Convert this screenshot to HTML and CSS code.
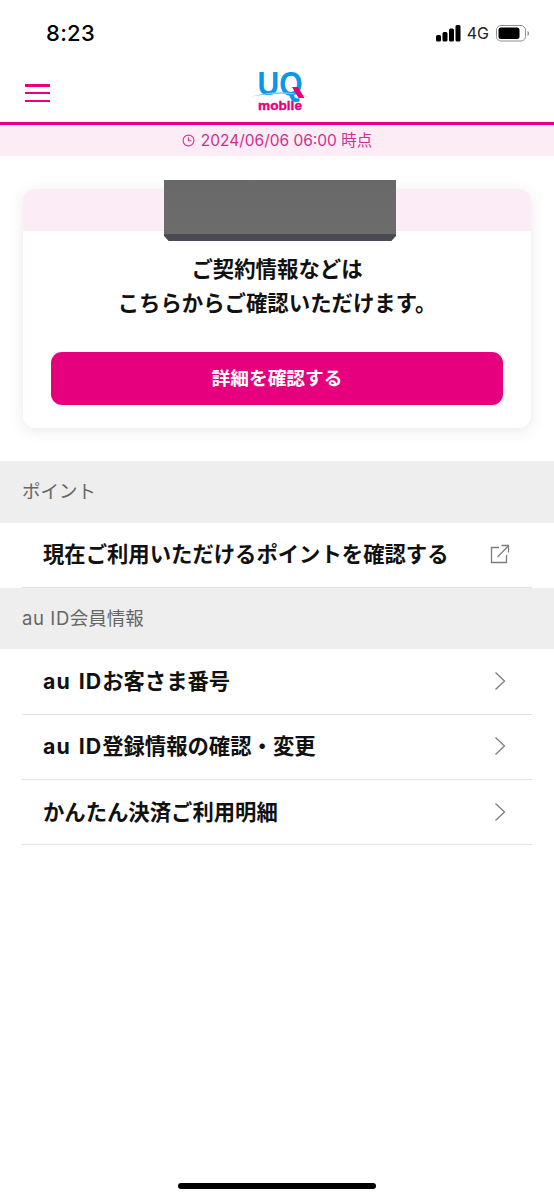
FILE: index.html
```html
<!DOCTYPE html>
<html lang="ja">
<head>
<meta charset="utf-8">
<title>UQ mobile</title>
<link rel="stylesheet" href="styles.css">
</head>
<body>
<div class="status">
  <span class="clock">8:23</span>
  <div class="status-right">
    <svg class="signal" width="25" height="17" viewBox="0 0 25 17"><rect x="0" y="10" width="5" height="6.500" rx="1.500"/><rect x="6.500" y="7" width="5" height="9.500" rx="1.500"/><rect x="13" y="3.500" width="5" height="13" rx="1.500"/><rect x="19.500" y="0" width="5" height="16.500" rx="1.500"/></svg>
    <span class="net">4G</span>
    <svg class="battery" width="34" height="17" viewBox="0 0 34 17"><rect x="0.500" y="0.500" width="29" height="15.500" rx="4.500" fill="none" stroke="#8e8e8e"/><rect x="2.500" y="2.500" width="21" height="11.500" rx="2.500" fill="#000"/><path d="M31.500 6v5c1-.4 1.600-1.400 1.600-2.500S32.500 6.400 31.500 6z" fill="#8e8e8e"/></svg>
  </div>
</div>
<header class="header">
  <button class="menu" aria-label="menu"><span></span><span></span><span></span></button>
  <svg class="logo" width="60" height="56" viewBox="0 -6 60 56">
    <text class="logo-uq" x="30" y="28" text-anchor="middle" textLength="45" lengthAdjust="spacingAndGlyphs">UQ</text>
    <path d="M1 30C18 23.500 42 23.500 59 30C42 25.500 18 25.500 1 30Z" fill="#7cc6f2"/>
    <path d="M42 20h6l6.500 11h-6z" fill="#e6007e"/>
    <text class="logo-mobile" x="30" y="43" text-anchor="middle" textLength="44" lengthAdjust="spacingAndGlyphs">mobile</text>
  </svg>
</header>
<div class="timestamp">
  <svg width="13" height="13" viewBox="0 0 13 13" fill="none" stroke="#d6338f" stroke-width="1.100"><circle cx="6.500" cy="6.500" r="5.400"/><path d="M6.500 3.200v3.500h3"/></svg>
  <span>2024/06/06 06:00 時点</span>
</div>
<main class="main">
  <section class="card">
    <div class="card-band"></div>
    <div class="redaction"></div>
    <p class="card-text">ご契約情報などは<br>こちらからご確認いただけます。</p>
    <a class="cta">詳細を確認する</a>
  </section>
</main>
<h2 class="section-title">ポイント</h2>
<ul class="list">
  <li class="row"><span>現在ご利用いただけるポイントを確認する</span>
    <svg class="ico" width="20" height="20" viewBox="0 0 20 20" fill="none" stroke="#7d7d7d" stroke-width="1.300"><path d="M9 3.500H1.500v15h15v-7.500"/><path d="M7.500 13L18 2.200"/><path d="M11.500 1.500H18.500v7"/></svg>
  </li>
</ul>
<h2 class="section-title"><span class="latin-light">au ID</span>会員情報</h2>
<ul class="list">
  <li class="row"><span><span class="latin">au ID</span>お客さま番号</span>
    <svg class="ico" width="20" height="20" viewBox="0 0 20 20" fill="none" stroke="#7d7d7d" stroke-width="1.300"><path d="M5.500 1.500L14.500 10L5.500 18.500"/></svg>
  </li>
  <li class="row"><span><span class="latin">au ID</span>登録情報の確認・変更</span>
    <svg class="ico" width="20" height="20" viewBox="0 0 20 20" fill="none" stroke="#7d7d7d" stroke-width="1.300"><path d="M5.500 1.500L14.500 10L5.500 18.500"/></svg>
  </li>
  <li class="row"><span>かんたん決済ご利用明細</span>
    <svg class="ico" width="20" height="20" viewBox="0 0 20 20" fill="none" stroke="#7d7d7d" stroke-width="1.300"><path d="M5.500 1.500L14.500 10L5.500 18.500"/></svg>
  </li>
</ul>
<div class="home-indicator"></div>
</body>
</html>
```
FILE: styles.css
```css
* { box-sizing: border-box; }
html, body { margin: 0; padding: 0; }
body {
  width: 554px;
  height: 1200px;
  position: relative;
  overflow: hidden;
  background: #fff;
  color: #000;
  font-family: "Inter", "Noto Sans CJK JP", sans-serif;
}
.status {
  height: 60px;
  display: flex;
  justify-content: space-between;
  align-items: flex-start;
  padding: 20px 24px 0 46px;
}
.clock {
  font: 500 22px/26px "Inter", sans-serif;
  letter-spacing: 0.300px;
}
.status-right {
  display: flex;
  align-items: center;
  gap: 6px;
  padding-top: 5px;
}
.net { font: 400 16px/17px "Inter", sans-serif; margin-right: 1px; color: #222; }
.signal { display: block; }
.battery { display: block; }
.header {
  height: 62px;
  position: relative;
  display: flex;
  align-items: flex-start;
  justify-content: center;
  padding-top: 1px;
}
.menu {
  position: absolute;
  left: 25px;
  top: 24px;
  width: 25px;
  height: 18px;
  padding: 0;
  border: 0;
  background: none;
  display: flex;
  flex-direction: column;
  justify-content: space-between;
}
.menu span { display: block; height: 2.500px; background: #e6007e; }
.logo { display: block; margin-left: 6px; }
.logo-uq { font: 700 33px "Liberation Sans", sans-serif; fill: #0a96ec; }
.logo-mobile { font: 700 13px "Liberation Sans", sans-serif; fill: #e6007e; stroke: #e6007e; stroke-width: 0.400px; }
.timestamp {
  height: 34px;
  border-top: 3px solid #e6007e;
  background: #fbecf5;
  color: #cf2e8c;
  font: 400 15.500px/31px "Inter", "Noto Sans CJK JP", sans-serif;
  display: flex;
  align-items: center;
  justify-content: center;
  gap: 6px;
}
.main { padding: 33px 23px 33px; }
.card {
  position: relative;
  height: 239px;
  border-radius: 12px;
  background: #fff;
  box-shadow: 0 3px 14px rgba(120, 60, 110, 0.13);
  padding: 62px 28px 0;
}
.card-band {
  position: absolute;
  left: 0;
  right: 0;
  top: 0;
  height: 42px;
  background: #fbecf5;
  border-radius: 12px 12px 0 0;
}
.redaction {
  position: absolute;
  left: 141px;
  top: -9px;
  width: 232px;
  height: 61px;
  background: linear-gradient(#696969, #6c6c6c 88%, #4b4b55 88%, #4a4a52);
  clip-path: polygon(0 0, 100% 0, 100% 92%, 98% 100%, 2% 100%, 0 92%);
}
.card-text {
  margin: 0;
  text-align: center;
  font: 700 21.400px/34px "Noto Sans CJK JP", sans-serif;
  color: #111;
}
.cta {
  display: block;
  margin-top: 33px;
  height: 53px;
  border-radius: 11px;
  background: #e6007e;
  color: #fff;
  text-align: center;
  font: 700 18.700px/50px "Noto Sans CJK JP", sans-serif;
}
.section-title {
  margin: 0;
  height: 61.500px;
  background: #eeeeee;
  padding-left: 22px;
  color: #666;
  font: 400 18.500px/60px "Inter", "Noto Sans CJK JP", sans-serif;
}
.latin-light { letter-spacing: 0.600px; }
.list { list-style: none; margin: 0; padding: 0 22px; }
.row {
  height: 65.300px;
  display: flex;
  align-items: center;
  justify-content: space-between;
  padding: 0 22px 1px 21px;
  border-bottom: 1px solid #e2e2e2;
  font: 700 21.350px/30px "Inter", "Noto Sans CJK JP", sans-serif;
  color: #111;
}
.latin { letter-spacing: 1px; word-spacing: 2px; }
.ico { display: block; flex: none; }
.home-indicator {
  position: absolute;
  left: 178px;
  bottom: 11px;
  width: 198px;
  height: 6px;
  border-radius: 3px;
  background: #000;
}
```
